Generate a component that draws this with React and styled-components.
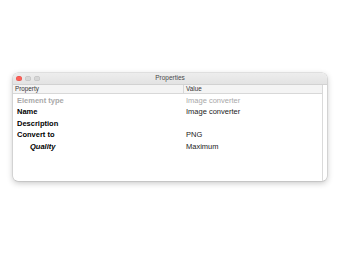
import React from "react";
import styled, { createGlobalStyle } from "styled-components";

const Global = createGlobalStyle`
  html, body { margin: 0; padding: 0; background: #ffffff; }
  body { font-family: "Liberation Sans", Arial, sans-serif; }
`;

const Page = styled.div`
  width: 340px;
  height: 260px;
  padding: 73px 0 0 13px;
  box-sizing: border-box;
`;

const Window = styled.div`
  width: 314px;
  height: 108px;
  border-radius: 5px;
  background: #ffffff;
  box-shadow: 0 0 0 0.5px rgba(0,0,0,0.16), 0 2px 6px rgba(0,0,0,0.24);
  overflow: hidden;
  display: flex;
  flex-direction: column;
`;

const TitleBar = styled.div`
  height: 12px;
  flex: none;
  background: linear-gradient(#ededed, #e3e3e3);
  border-bottom: 1px solid #d2d2d2;
  box-sizing: border-box;
  display: grid;
  grid-template-columns: 1fr auto 1fr;
  align-items: center;
  padding: 0 3px 0 3px;
`;

const Lights = styled.div`
  display: flex;
  gap: 3.5px;
  align-items: center;
`;

const Light = styled.span`
  width: 5.5px;
  height: 5.5px;
  border-radius: 50%;
  background: ${p => p.$color};
  box-shadow: inset 0 0 0 0.4px rgba(0,0,0,0.12);
`;

const Title = styled.div`
  font-size: 6.5px;
  color: #4a4a4a;
  line-height: 1;
`;

const Table = styled.div`
  flex: 1;
  display: flex;
  flex-direction: column;
  padding-right: 4px;
`;

const HeaderRow = styled.div`
  display: grid;
  grid-template-columns: 170px 1fr;
  height: 9px;
  background: #f4f4f4;
  border-bottom: 1px solid #d8d8d8;
  border-right: 1px solid #d8d8d8;
  box-sizing: border-box;
  align-items: center;
`;

const HeaderCell = styled.div`
  font-size: 6.3px;
  color: #333;
  line-height: 8px;
  padding-left: 2px;
  border-left: ${p => (p.$first ? "none" : "1px solid #d8d8d8")};
`;

const Body = styled.div`
  flex: 1;
  border-right: 1px solid #dadada;
  padding-top: 1px;
`;

const Row = styled.div`
  display: grid;
  grid-template-columns: 170px 1fr;
  height: 11.4px;
  align-items: center;
`;

const NameCell = styled.div`
  font-size: 7.5px;
  font-weight: bold;
  font-style: ${p => (p.$italic ? "italic" : "normal")};
  color: ${p => (p.$muted ? "#a9a9a9" : "#000")};
  padding-left: ${p => (p.$indent ? "17px" : "4px")};
  line-height: 1;
  white-space: nowrap;
`;

const ValueCell = styled.div`
  font-size: 7.5px;
  color: ${p => (p.$muted ? "#a9a9a9" : "#1a1a1a")};
  padding-left: 3px;
  line-height: 1;
  white-space: nowrap;
`;

const rows = [
  { name: "Element type", value: "Image converter", muted: true },
  { name: "Name", value: "Image converter" },
  { name: "Description", value: "" },
  { name: "Convert to", value: "PNG" },
  { name: "Quality", value: "Maximum", indent: true, italic: true },
];

export default function App() {
  return (
    <>
      <Global />
      <Page>
        <Window>
          <TitleBar>
            <Lights>
              <Light $color="#fe5f57" />
              <Light $color="#d6d6d6" />
              <Light $color="#d6d6d6" />
            </Lights>
            <Title>Properties</Title>
            <div />
          </TitleBar>
          <Table>
            <HeaderRow>
              <HeaderCell $first>Property</HeaderCell>
              <HeaderCell>Value</HeaderCell>
            </HeaderRow>
            <Body>
              {rows.map(r => (
                <Row key={r.name}>
                  <NameCell $muted={r.muted} $indent={r.indent} $italic={r.italic}>
                    {r.name}
                  </NameCell>
                  <ValueCell $muted={r.muted}>{r.value}</ValueCell>
                </Row>
              ))}
            </Body>
          </Table>
        </Window>
      </Page>
    </>
  );
}
